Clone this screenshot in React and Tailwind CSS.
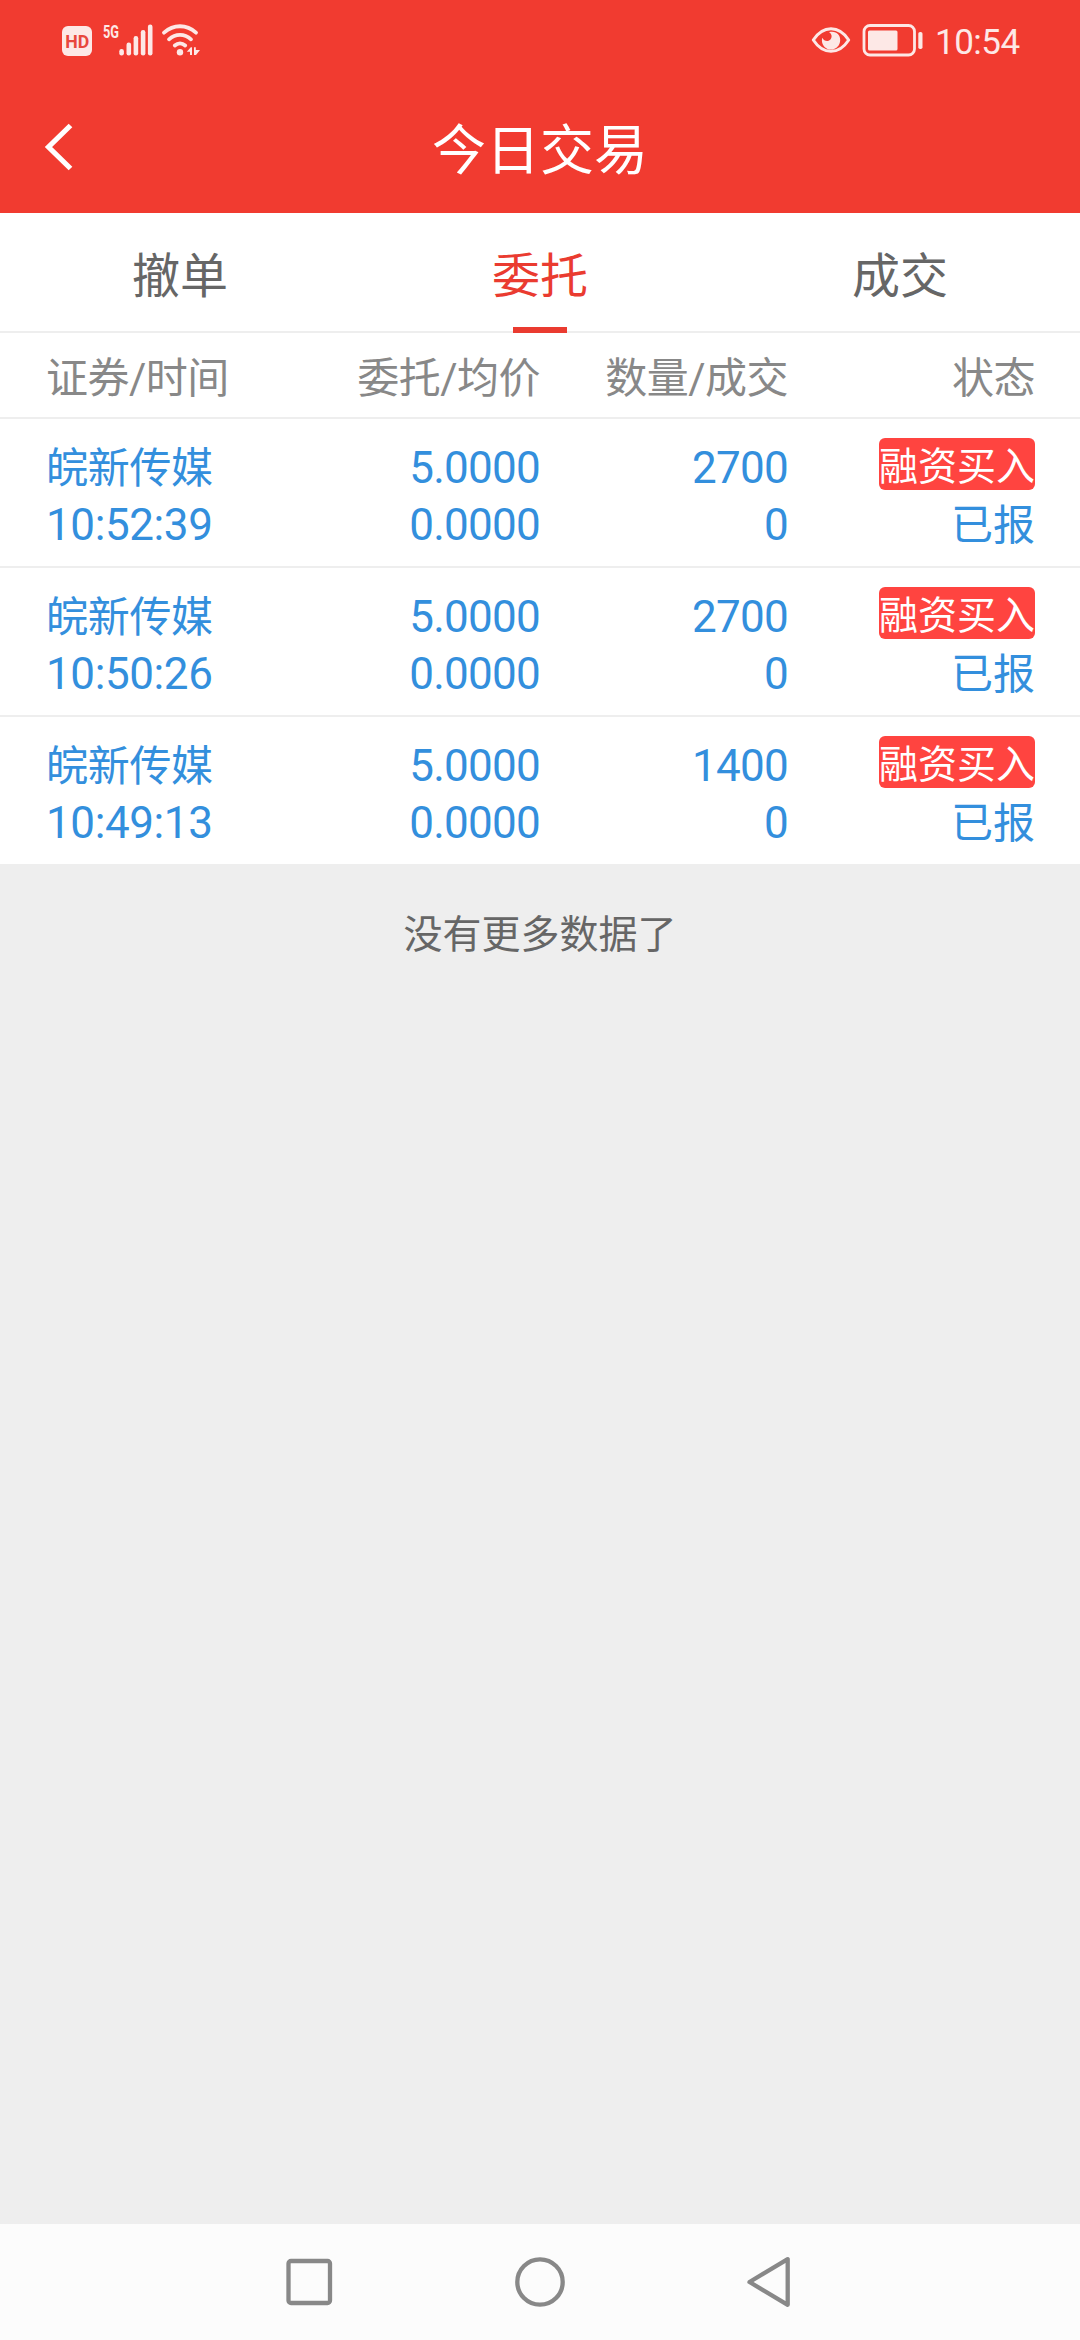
import React, { useState } from 'react';
import clsx from 'clsx';

const tabs = [
  { key: 'cancel', label: '撤单' },
  { key: 'orders', label: '委托' },
  { key: 'deals', label: '成交' },
];

const orders = [
  { name: '皖新传媒', time: '10:52:39', price: '5.0000', avg: '0.0000', qty: '2700', filled: '0', side: '融资买入', status: '已报' },
  { name: '皖新传媒', time: '10:50:26', price: '5.0000', avg: '0.0000', qty: '2700', filled: '0', side: '融资买入', status: '已报' },
  { name: '皖新传媒', time: '10:49:13', price: '5.0000', avg: '0.0000', qty: '1400', filled: '0', side: '融资买入', status: '已报' },
];

function SignalIcons() {
  return (
    <svg width="142" height="60" viewBox="60 10 142 60" fill="#fde8e6">
      <rect x="62" y="26" width="30" height="30" rx="6" />
      <text x="77.300" y="48" textAnchor="middle" fontSize="19" fontWeight="700" textLength="24" lengthAdjust="spacingAndGlyphs" fill="#e8473d">HD</text>
      <text x="103" y="38" fontSize="19" fontWeight="700" textLength="16" lengthAdjust="spacingAndGlyphs">5G</text>
      <rect x="119.3" y="49" width="4.6" height="6.5" rx="2.2" />
      <rect x="126.5" y="42.5" width="4.6" height="13" rx="2.2" />
      <rect x="133.6" y="36" width="4.6" height="19.5" rx="2.2" />
      <rect x="140.8" y="30" width="4.6" height="25.5" rx="2.2" />
      <rect x="147.9" y="24.5" width="4.6" height="31" rx="2.2" />
      <g fill="none" stroke="#fde8e6" strokeWidth="3.8" strokeLinecap="round">
        <path d="M164 32.700C173.500 24.100 186.500 24.100 196 32.700" />
        <path d="M169 39.300C175.500 33.500 184.500 33.500 191 39.300" />
        <path d="M174.800 45.500C178 42.700 182 42.700 185.200 45.500" />
      </g>
      <circle cx="180" cy="52.300" r="3.200" />
      <path d="M186.800 51.800L190.800 47.200H192V55H190V51.800ZM194 47.200H195.800V50H200L196 55H194Z" />
    </svg>
  );
}

function EyeIcon() {
  return (
    <svg width="40" height="30" viewBox="810 25 40 30">
      <path d="M812.300 40C822 25 838 25 847.700 40C838 55 822 55 812.300 40Z" fill="none" stroke="#fde8e6" strokeWidth="3" strokeLinejoin="round" />
      <path d="M828 32.200C835.500 30.600 839.200 35 839.200 40C839.200 45.500 835 49.600 830 49.600C825 49.600 820.900 45.500 820.900 40.500C820.900 39.500 821.100 38.500 821.400 37.800C823 41.500 827.500 42 829.600 39.200C831.500 36.700 830.600 33.600 828 32.200Z" fill="#fde8e6" />
    </svg>
  );
}

function BatteryIcon() {
  return (
    <svg width="62" height="34" viewBox="861 23 62 34">
      <rect x="863" y="25.500" width="50.500" height="29.500" rx="6" fill="none" stroke="#fde8e6" strokeWidth="2.800" />
      <rect x="867" y="30.500" width="29.500" height="20" rx="1.500" fill="#fde8e6" />
      <rect x="917.300" y="32" width="4.200" height="17" rx="1.800" fill="#fde8e6" />
    </svg>
  );
}

function StatusBar() {
  return (
    <div className="h-20 pl-[60px] pr-[60px] flex items-center justify-between">
      <SignalIcons />
      <div className="flex items-center">
        <EyeIcon />
        <div className="ml-[11px] flex">
          <BatteryIcon />
        </div>
        <span className="ml-[11px] mt-1.5 w-[85px] text-[35px] leading-[40px] tracking-[-0.5px] whitespace-nowrap text-[#fde8e6]">
          10:54
        </span>
      </div>
    </div>
  );
}

function TitleBar() {
  return (
    <div className="h-[133px] px-[42px] grid grid-cols-[1fr_auto_1fr] items-center">
      <button aria-label="返回" className="w-9">
        <svg width="36" height="52" viewBox="42 121 36 52" fill="none" stroke="#fff" strokeWidth="5.200">
          <path d="M70.500 125.500L48.500 147L70.500 168.500" />
        </svg>
      </button>
      <h1 className="text-[54px] leading-[60px] text-white pt-2.5">今日交易</h1>
    </div>
  );
}

function OrderRow({ order }) {
  return (
    <li className="h-[149px] last:h-[147px] border-b-2 last:border-b-0 border-[#eeeeee] pl-[46px] pr-[45px] pt-[21px] grid grid-cols-[224px_270px_248px_247px] text-[42px] leading-[57px] text-[#338fdd]">
      <div>
        <div className="tracking-[-0.3px]">{order.name}</div>
        <div className="text-[44px] tracking-[-0.4px]">{order.time}</div>
      </div>
      <div className="text-right text-[44px] tracking-[-0.75px]">
        <div>{order.price}</div>
        <div>{order.avg}</div>
      </div>
      <div className="text-right text-[44px] tracking-[-0.75px]">
        <div>{order.qty}</div>
        <div>{order.filled}</div>
      </div>
      <div className="flex flex-col items-end">
        <div className="h-[57px]">
          <span className="block h-[52px] -mt-0.5 rounded-md bg-[#ff4440] text-white text-[39px] leading-[59px]">{order.side}</span>
        </div>
        <div>{order.status}</div>
      </div>
    </li>
  );
}

export default function App() {
  const [active, setActive] = useState('orders');

  return (
    <div className="w-[1080px] h-[2340px] flex flex-col bg-[#eeeeee] font-['Roboto','Noto_Sans_CJK_SC',sans-serif]">
      <header className="h-[213px] bg-[#f13b30]">
        <StatusBar />
        <TitleBar />
      </header>

      {/* Tabs */}
      <nav className="h-[120px] bg-white border-b-2 border-[#eeeeee] grid grid-cols-3">
        {tabs.map((tab) => (
          <button
            key={tab.key}
            onClick={() => setActive(tab.key)}
            className={clsx(
              'relative h-[118px] pt-[9px] text-[48px] leading-[60px]',
              active === tab.key ? 'text-[#ea3b30]' : 'text-[#666666]'
            )}
          >
            {tab.label}
            {active === tab.key && (
              <span className="absolute left-1/2 -ml-[27px] -bottom-0.5 w-[54px] h-1.5 bg-[#ea3b30]" />
            )}
          </button>
        ))}
      </nav>

      {/* Column titles */}
      <div className="h-[86px] bg-white border-b-2 border-[#eeeeee] pl-[46px] pr-[45px] pt-[7px] grid grid-cols-[224px_270px_248px_247px] items-center text-[42px] leading-[60px] tracking-[-0.5px] text-[#888888]">
        <span>证券/时间</span>
        <span className="text-right">委托/均价</span>
        <span className="text-right">数量/成交</span>
        <span className="text-right">状态</span>
      </div>

      <ul className="bg-white">
        {orders.map((order) => (
          <OrderRow key={order.time} order={order} />
        ))}
      </ul>

      <p className="flex-1 pt-[43px] text-center text-[39px] leading-[57px] text-[#666666]">没有更多数据了</p>

      {/* System navigation */}
      <footer className="h-[116px] bg-[#fcfcfc] flex justify-center items-center gap-[178px]">
        <svg width="52" height="52" viewBox="0 0 52 52" fill="none" stroke="#888888" strokeWidth="4.300">
          <rect x="4.500" y="5" width="41.500" height="42" rx="2.500" />
        </svg>
        <svg width="52" height="52" viewBox="0 0 52 52" fill="none" stroke="#888888" strokeWidth="4.300">
          <circle cx="26" cy="26" r="22.700" />
        </svg>
        <svg width="52" height="52" viewBox="0 0 52 52" fill="none" stroke="#888888" strokeWidth="4.300" strokeLinejoin="round">
          <path d="M5.500 26L43.700 3.200V48.800Z" />
        </svg>
      </footer>
    </div>
  );
}
